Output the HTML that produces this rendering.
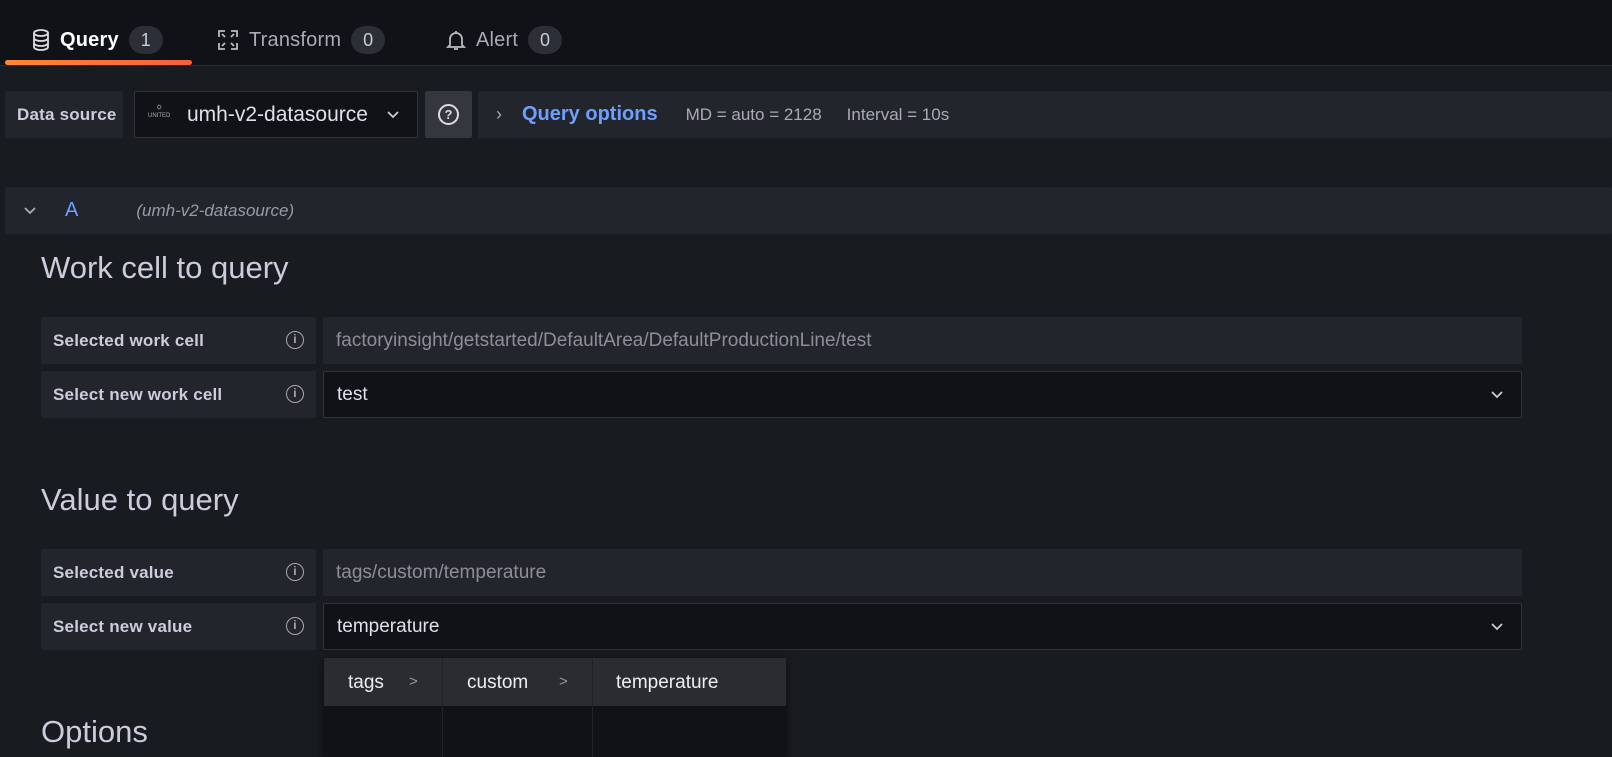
<!DOCTYPE html>
<html><head><style>
*{box-sizing:border-box;margin:0;padding:0}
body{width:1612px;height:757px;overflow:hidden;background:#181b1f;font-family:"Liberation Sans",sans-serif;color:#ccccdc;position:relative}
.a{position:absolute}
.top{left:0;top:0;width:1612px;height:66px;background:#111217;border-bottom:1px solid #2a2d33}
.tab{top:26px;font-size:20px;display:flex;align-items:center;gap:10px;letter-spacing:.2px}
.badge{background:#2c2f36;border-radius:14px;height:28px;min-width:34px;padding:0 11px;display:flex;align-items:center;justify-content:center;font-size:18px;color:#ccccdc}
.box{background:#22252b;border-radius:2px}
.lbl{font-size:17px;font-weight:bold;color:#ccccdc;display:flex;align-items:center;padding-left:12px;letter-spacing:.2px}
.inp{display:flex;align-items:center;padding-left:13px;font-size:19px;border-radius:2px}
.h{font-size:31px;color:#ccccdc;left:41px}
.info{position:absolute;right:12px;top:14px;width:18px;height:18px;border:1.6px solid #aaa;border-radius:50%;font-size:12px;text-align:center;line-height:15px;font-weight:bold;color:#aaa}
.chev{position:absolute;right:18px;top:16px}
</style></head><body>
<div class="a top"></div>
<div class="a tab" style="left:32px;color:#fff;font-weight:bold">
<svg width="18" height="22" viewBox="0 0 18 22" fill="none" stroke="#ddd" stroke-width="1.8"><ellipse cx="9" cy="4" rx="7" ry="3"/><path d="M2 4v14c0 1.7 3 3 7 3s7-1.3 7-3V4M2 9c0 1.7 3 3 7 3s7-1.3 7-3M2 14c0 1.7 3 3 7 3s7-1.3 7-3"/></svg>
<span>Query</span><span class="badge" style="font-weight:normal">1</span></div>
<div class="a" style="left:5px;top:60px;width:187px;height:5px;border-radius:3px;background:linear-gradient(90deg,#ff8833,#f55f3e)"></div>
<div class="a tab" style="left:217px;color:#aaaab8">
<svg width="22" height="22" viewBox="0 0 22 22" fill="none" stroke="#bbb" stroke-width="1.8"><path d="M2 8V2h6M14 2h6v6M20 14v6h-6M8 20H2v-6M5 5l3 3M17 5l-3 3M17 17l-3-3M5 17l3-3"/></svg>
<span>Transform</span><span class="badge">0</span></div>
<div class="a tab" style="left:446px;color:#aaaab8">
<svg width="20" height="22" viewBox="0 0 20 22" fill="none" stroke="#bbb" stroke-width="1.8"><path d="M4 16V10a6 6 0 0 1 12 0v6l2 2H2zM8 20h4M10 2v2"/></svg>
<span>Alert</span><span class="badge">0</span></div>

<div class="a box lbl" style="left:5px;top:91px;width:118px;height:47px">Data source</div>
<div class="a inp" style="left:134px;top:91px;width:284px;height:47px;background:#111217;border:1px solid #2f3238;padding-left:52px;color:#e0e0e8;font-size:21px">umh-v2-datasource
<div class="a" style="left:13px;top:12px;font-size:6px;color:#aaa;line-height:8px;text-align:center">⛭<br>UNITED</div>
<svg class="chev" style="top:19px" width="12" height="8" viewBox="0 0 12 8" fill="none" stroke="#ccc" stroke-width="1.8"><path d="M1 1l5 5 5-5"/></svg></div>
<div class="a" style="left:425px;top:91px;width:47px;height:47px;background:#34373e;border-radius:2px"><div style="margin:13px auto;width:21px;height:21px;border:2px solid #ddd;border-radius:50%;font-size:13px;font-weight:bold;text-align:center;line-height:17px;color:#ddd">?</div></div>
<div class="a box" style="left:478px;top:91px;width:1134px;height:47px;display:flex;align-items:center;font-size:17px">
<span style="margin-left:18px;color:#aaa;font-size:18px">›</span>
<span style="margin-left:20px;color:#6e9fff;font-size:20px;font-weight:bold">Query options</span>
<span style="margin-left:28px;color:#aaaab8">MD = auto = 2128</span>
<span style="margin-left:25px;color:#aaaab8">Interval = 10s</span></div>

<div class="a box" style="left:5px;top:187px;width:1607px;height:47px;display:flex;align-items:center">
<svg style="margin-left:19px" width="12" height="8" viewBox="0 0 12 8" fill="none" stroke="#aaa" stroke-width="1.8"><path d="M1 1l5 5 5-5"/></svg>
<span style="margin-left:29px;color:#6e9fff;font-size:20px">A</span>
<span style="margin-left:58px;color:#999aa8;font-style:italic;font-size:17px">(umh-v2-datasource)</span></div>

<div class="a h" style="top:250px">Work cell to query</div>
<div class="a box lbl" style="left:41px;top:317px;width:275px;height:47px">Selected work cell<span class="info">i</span></div>
<div class="a box inp" style="left:323px;top:317px;width:1199px;height:47px;color:#8e8e9a">factoryinsight/getstarted/DefaultArea/DefaultProductionLine/test</div>
<div class="a box lbl" style="left:41px;top:371px;width:275px;height:47px">Select new work cell<span class="info">i</span></div>
<div class="a inp" style="left:323px;top:371px;width:1199px;height:47px;background:#111217;border:1px solid #2f3238;color:#e0e0e8">test<svg class="chev" style="top:19px" width="12" height="8" viewBox="0 0 12 8" fill="none" stroke="#ccc" stroke-width="1.8"><path d="M1 1l5 5 5-5"/></svg></div>

<div class="a h" style="top:482px">Value to query</div>
<div class="a box lbl" style="left:41px;top:549px;width:275px;height:47px">Selected value<span class="info">i</span></div>
<div class="a box inp" style="left:323px;top:549px;width:1199px;height:47px;color:#8e8e9a">tags/custom/temperature</div>
<div class="a box lbl" style="left:41px;top:603px;width:275px;height:47px">Select new value<span class="info">i</span></div>
<div class="a inp" style="left:323px;top:603px;width:1199px;height:47px;background:#111217;border:1px solid #2f3238;color:#e0e0e8">temperature<svg class="chev" style="top:19px" width="12" height="8" viewBox="0 0 12 8" fill="none" stroke="#ccc" stroke-width="1.8"><path d="M1 1l5 5 5-5"/></svg></div>

<div class="a h" style="top:714px">Options</div>

<div class="a" style="left:324px;top:658px;width:462px;height:99px;background:#111217;box-shadow:0 2px 8px rgba(0,0,0,.6)">
<div class="a" style="left:0;top:0;width:462px;height:48px;background:#2a2c32"></div>
<div class="a" style="left:118px;top:0;width:1px;height:99px;background:#202227"></div>
<div class="a" style="left:268px;top:0;width:1px;height:99px;background:#202227"></div>
<div class="a" style="left:24px;top:14px;font-size:19px;color:#eee">tags</div>
<div class="a" style="left:85px;top:15px;font-size:15px;color:#999">&gt;</div>
<div class="a" style="left:143px;top:14px;font-size:19px;color:#eee">custom</div>
<div class="a" style="left:235px;top:15px;font-size:15px;color:#999">&gt;</div>
<div class="a" style="left:292px;top:14px;font-size:19px;color:#eee">temperature</div>
</div>
</body></html>
